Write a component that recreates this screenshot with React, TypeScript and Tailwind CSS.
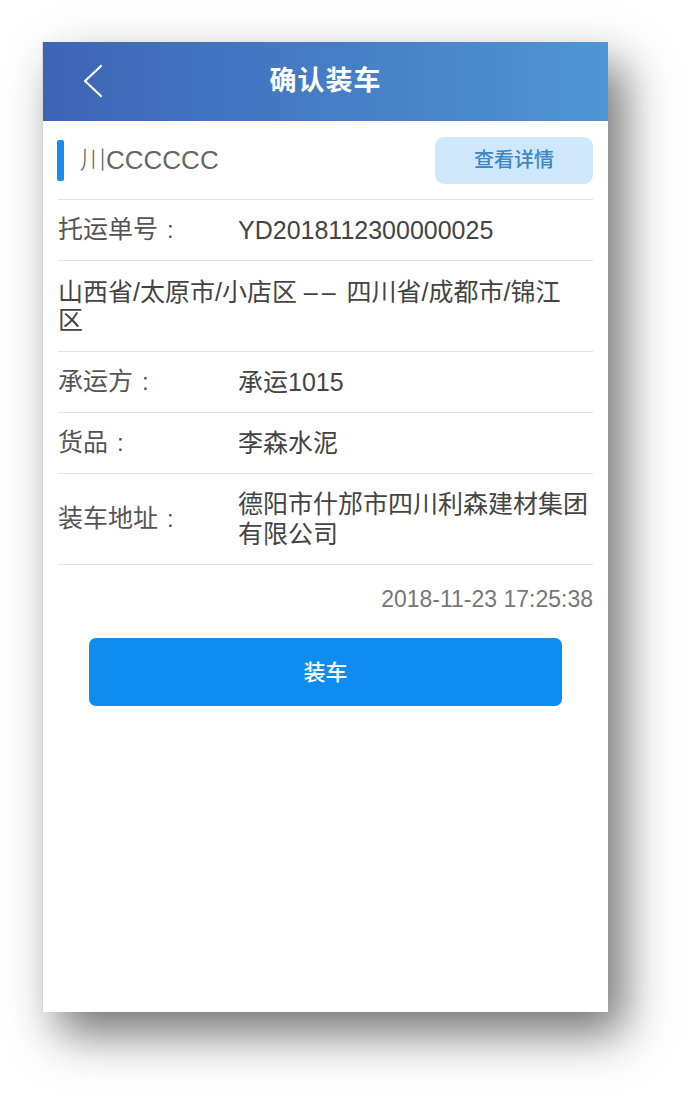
import React from "react";

const FONT = { fontFamily: '"Liberation Sans", "Noto Sans CJK SC", sans-serif' };

function Label({ text }: { text: string }) {
  return (
    <div className="flex w-[180px] shrink-0 items-center text-[25px] text-[#555]">
      <span>{text}</span>
      <span className="ml-[9px] text-[24px]">:</span>
    </div>
  );
}

function Row({ label, children, tall }: { label: string; children: React.ReactNode; tall?: boolean }) {
  return (
    <div className={`flex items-center border-b border-[#e3e3e3] ${tall ? "h-[91px]" : "h-[61px]"}`}>
      <Label text={label} />
      <div className="flex-1 text-[25px] leading-[30px] text-[#444]">{children}</div>
    </div>
  );
}

export default function App() {
  return (
    <div className="min-h-[1096px] bg-white pl-[42px] pt-[42px]" style={FONT}>
      <div className="flex h-[970px] w-[566px] flex-col border-l border-[#d8d8d8] bg-white shadow-[16px_22px_44px_rgba(0,0,0,0.55)]">
        <div className="relative flex h-[79px] shrink-0 items-center justify-center bg-linear-to-r from-[#3d65b5] to-[#4f95d3]">
          <svg className="absolute left-[38px] top-[22px]" width="24" height="34" viewBox="0 0 24 34" fill="none">
            <path d="M20 2 L4 17 L20 32" stroke="white" strokeWidth="2.2" strokeLinecap="round" strokeLinejoin="round" />
          </svg>
          <div className="text-[27px] font-bold tracking-[1px] text-white">确认装车</div>
        </div>
        <div className="flex flex-col px-[15px]">
          <div className="flex h-[79px] items-center justify-between border-b border-[#e3e3e3]">
            <div className="flex items-center">
              <div className="ml-[-1px] h-[41px] w-[7px] rounded-[2px] bg-[#1a8aec]" />
              <div className="ml-[16px] text-[26px] font-light text-[#666]">川CCCCCC</div>
            </div>
            <div className="flex h-[47px] w-[158px] items-center justify-center rounded-[9px] bg-[#cfe8fb] text-[20px] font-medium text-[#3d86c8]">
              查看详情
            </div>
          </div>
          <Row label="托运单号">YD2018112300000025</Row>
          <div className="flex h-[91px] items-center border-b border-[#e3e3e3] text-[25px] leading-[28px] text-[#444]">
            <div>
              山西省/太原市/小店区 <span className="tracking-[4px]">––</span> 四川省/成都市/锦江
              <br />区
            </div>
          </div>
          <Row label="承运方">承运1015</Row>
          <Row label="货品">李森水泥</Row>
          <Row label="装车地址" tall>德阳市什邡市四川利森建材集团有限公司</Row>
          <div className="mt-[21px] text-right text-[23px] leading-[26px] text-[#777]">2018-11-23 17:25:38</div>
          <div className="mx-[31px] mt-[26px] flex h-[68px] items-center justify-center rounded-[7px] bg-[#0f8cf0] text-[22px] font-medium text-white">
            装车
          </div>
        </div>
      </div>
    </div>
  );
}
